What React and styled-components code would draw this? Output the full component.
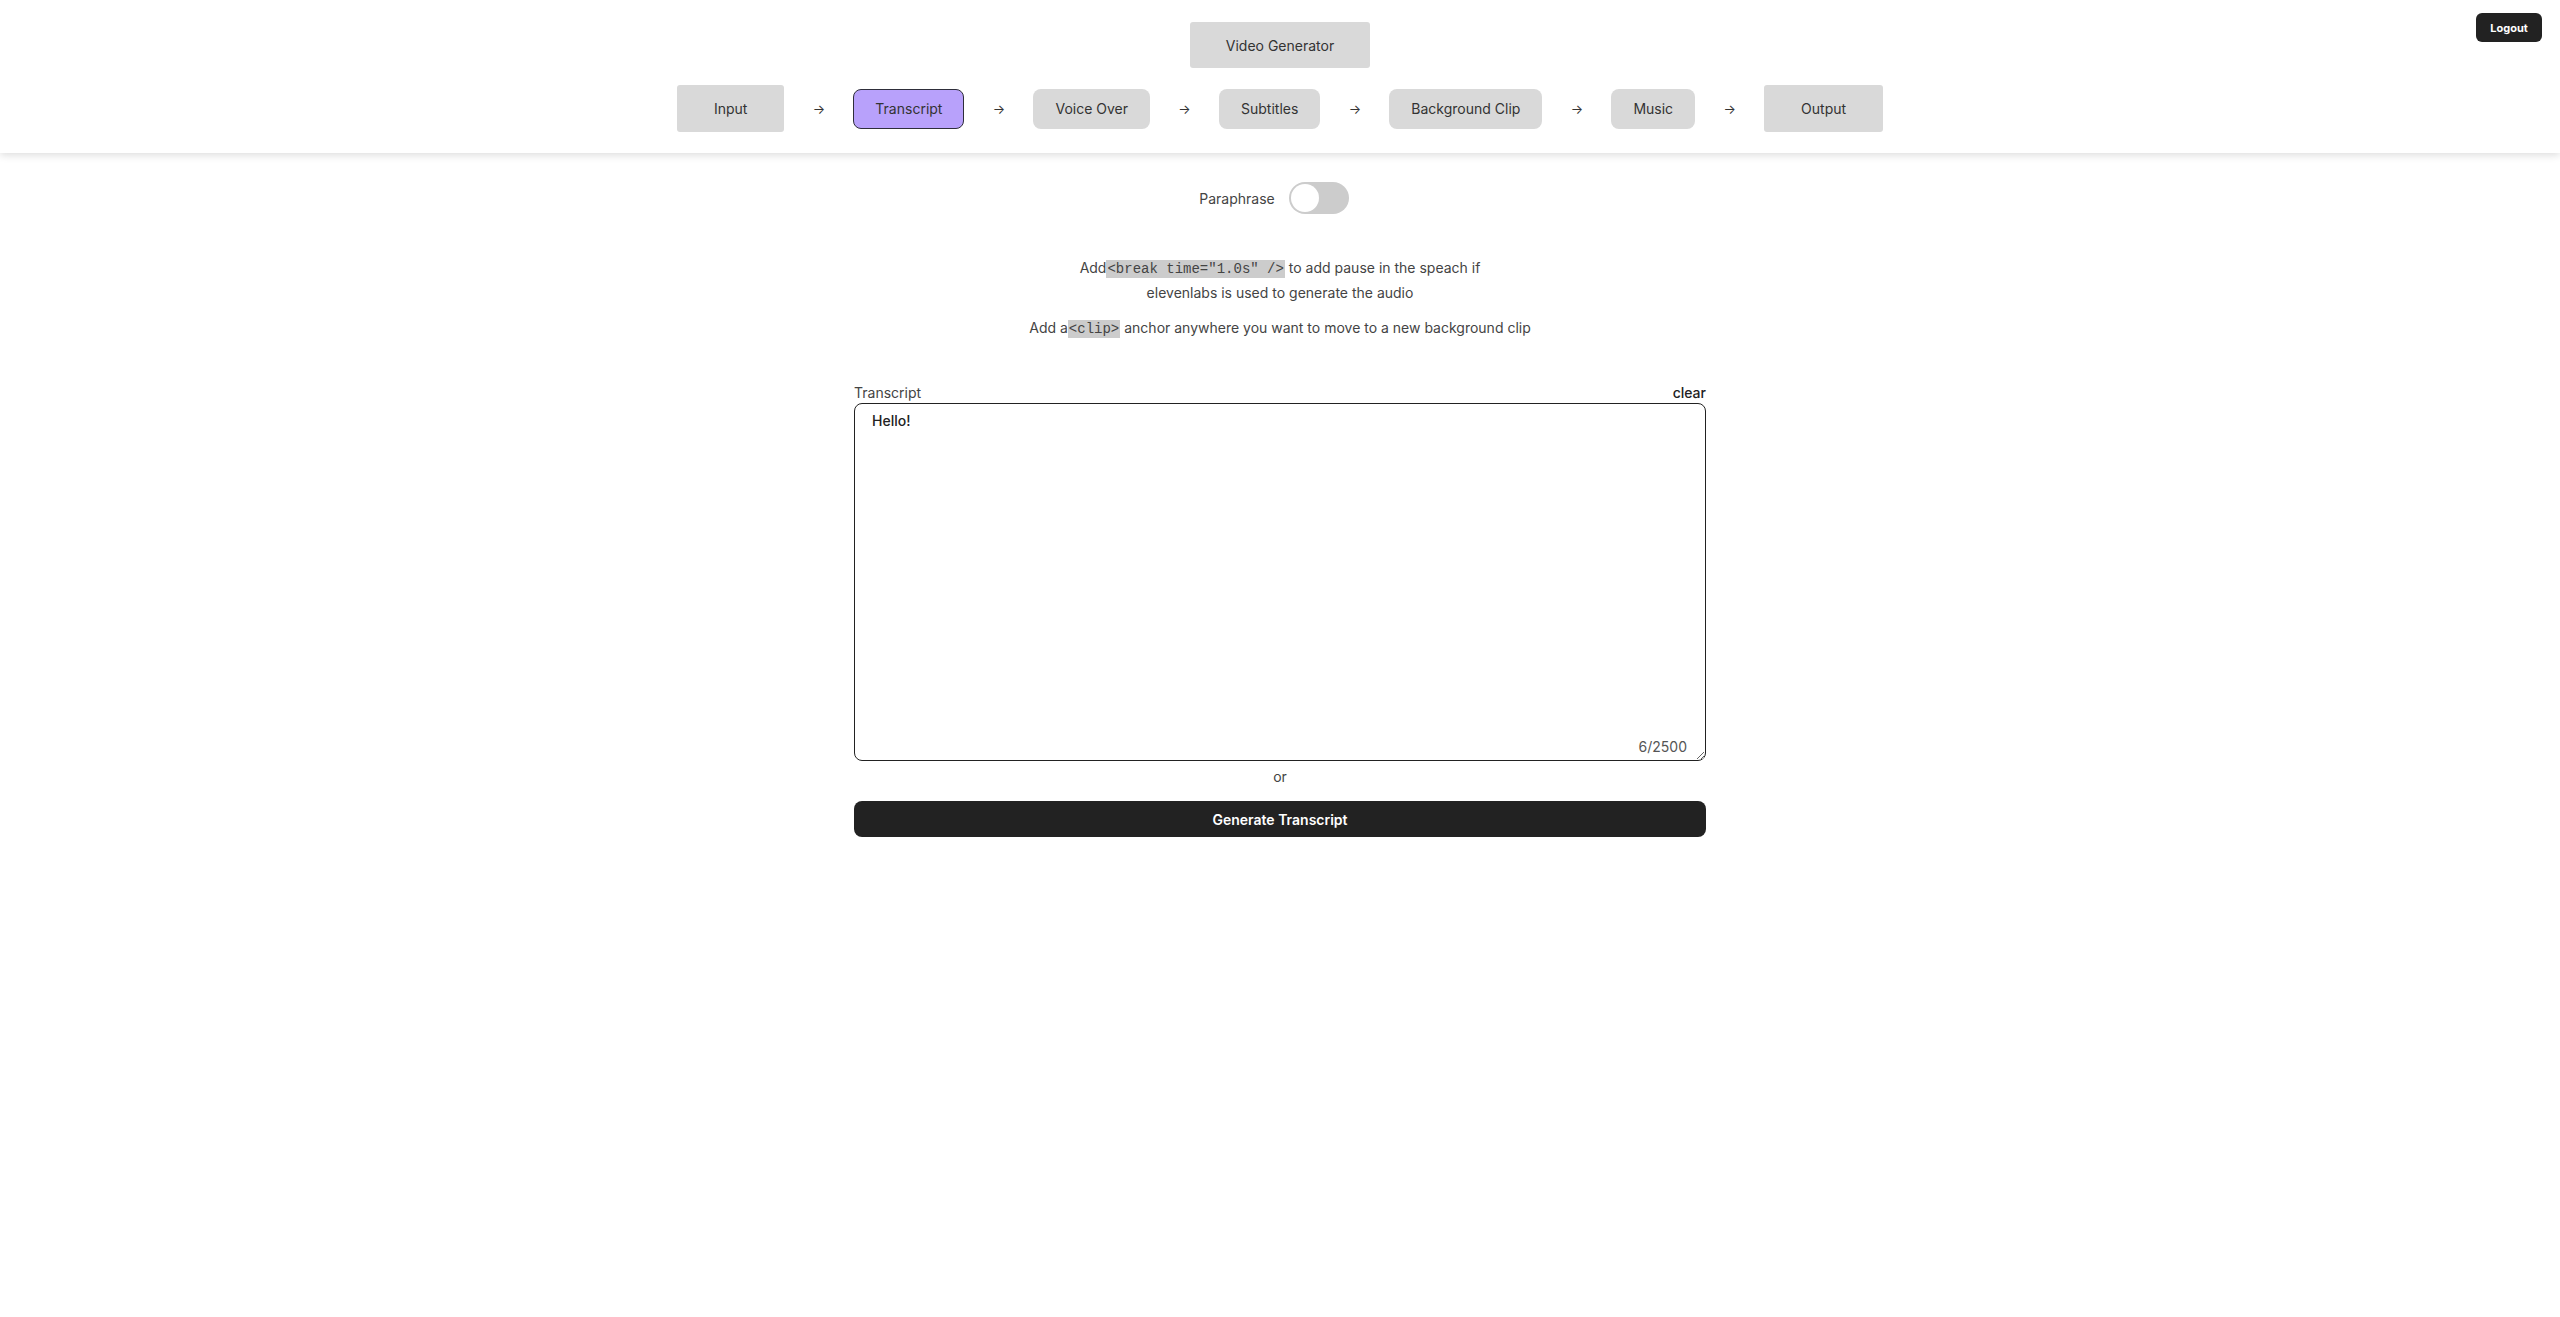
import React, { useState } from "react";
import styled, { createGlobalStyle } from "styled-components";

const GlobalStyle = createGlobalStyle`
  * {
    box-sizing: border-box;
  }
  body {
    margin: 0;
    background: #fff;
    font-family: Inter, "Noto Sans", "Liberation Sans", sans-serif;
    font-size: 14px;
    color: #333;
  }
`;

const Header = styled.header`
  position: relative;
  background: #fff;
  padding: 22px 0 21px;
  display: flex;
  flex-direction: column;
  align-items: center;
  gap: 17px;
  box-shadow: 0 2px 8px rgba(0, 0, 0, 0.14);
`;

const Title = styled.div`
  width: 180px;
  height: 46px;
  display: flex;
  align-items: center;
  justify-content: center;
  background: #d9d9d9;
  border-radius: 3px;
  color: #333;
`;

const LogoutButton = styled.button`
  position: absolute;
  top: 13px;
  right: 18px;
  width: 66px;
  height: 29px;
  border: none;
  border-radius: 6px;
  background: #222;
  color: #fff;
  font-family: inherit;
  font-size: 11px;
  font-weight: 700;
  cursor: pointer;
`;

const Steps = styled.nav`
  display: flex;
  align-items: center;
  gap: 28px;
`;

const Step = styled.div`
  height: ${({ $edge }) => ($edge ? "47px" : "40px")};
  padding: 0 ${({ $edge }) => ($edge ? "36px" : "21px")};
  display: flex;
  align-items: center;
  justify-content: center;
  border-radius: ${({ $edge }) => ($edge ? "3px" : "8px")};
  background: ${({ $active }) => ($active ? "#b8a1fb" : "#d9d9d9")};
  border: 1px solid ${({ $active }) => ($active ? "#2e2e3a" : "transparent")};
  color: #333;
  white-space: nowrap;
`;

const Arrow = styled.span`
  width: 13px;
  text-align: center;
  color: #333;
  font-size: 13px;
`;

const Main = styled.main`
  width: 852px;
  margin: 0 auto;
  padding-top: 29px;
  display: flex;
  flex-direction: column;
`;

const ParaphraseRow = styled.div`
  display: flex;
  align-items: center;
  justify-content: center;
  gap: 14px;
  height: 32px;
  padding-right: 12px;
  color: #444;
`;

const Toggle = styled.button`
  position: relative;
  width: 60px;
  height: 32px;
  border: none;
  border-radius: 16px;
  padding: 0;
  background: ${({ $on }) => ($on ? "#b8a1fb" : "#ccc")};
  cursor: pointer;
`;

const Knob = styled.span`
  position: absolute;
  top: 2px;
  left: ${({ $on }) => ($on ? "30px" : "2px")};
  width: 28px;
  height: 28px;
  border-radius: 50%;
  background: #fff;
`;

const Notes = styled.div`
  margin-top: 42px;
  display: flex;
  flex-direction: column;
  gap: 12px;
  text-align: center;
  color: #444;
  line-height: 23px;
`;

const Note = styled.p`
  margin: 0;
`;

const Code = styled.code`
  font-family: "Liberation Mono", "DejaVu Sans Mono", monospace;
  font-size: 14px;
  background: #ccc;
  color: #444;
  padding: 1px 1px;
`;

const FieldHead = styled.div`
  margin-top: 43px;
  display: flex;
  justify-content: space-between;
  align-items: center;
  line-height: 17px;
`;

const Label = styled.label`
  color: #444;
`;

const ClearLink = styled.button`
  border: none;
  background: none;
  padding: 0;
  font-family: inherit;
  font-size: 14px;
  font-weight: 500;
  color: #222;
  cursor: pointer;
`;

const TextWrap = styled.div`
  position: relative;
  margin-top: 2px;
`;

const TextArea = styled.textarea`
  display: block;
  width: 100%;
  height: 358px;
  padding: 8px 17px;
  border: 1px solid #222;
  border-radius: 8px;
  font-family: inherit;
  font-size: 14px;
  font-weight: 500;
  color: #222;
  resize: vertical;
  outline: none;
`;

const Counter = styled.span`
  position: absolute;
  right: 19px;
  bottom: 6px;
  color: #555;
  font-size: 14px;
`;

const Or = styled.div`
  margin-top: 7px;
  text-align: center;
  color: #444;
  line-height: 17px;
`;

const GenerateButton = styled.button`
  margin-top: 16px;
  height: 36px;
  border: none;
  border-radius: 8px;
  background: #222;
  color: #fff;
  font-family: inherit;
  font-size: 14px;
  font-weight: 600;
  cursor: pointer;
`;

const steps = [
  "Input",
  "Transcript",
  "Voice Over",
  "Subtitles",
  "Background Clip",
  "Music",
  "Output",
];

const App = () => {
  const [paraphrase, setParaphrase] = useState(false);
  const [text, setText] = useState("Hello!");

  return (
    <>
      <GlobalStyle />
      <Header>
        <Title>Video Generator</Title>
        <Steps>
          {steps.map((name, i) => (
            <React.Fragment key={name}>
              {i > 0 && <Arrow>→</Arrow>}
              <Step
                $edge={i === 0 || i === steps.length - 1}
                $active={name === "Transcript"}
              >
                {name}
              </Step>
            </React.Fragment>
          ))}
        </Steps>
        <LogoutButton>Logout</LogoutButton>
      </Header>
      <Main>
        <ParaphraseRow>
          <span>Paraphrase</span>
          <Toggle $on={paraphrase} onClick={() => setParaphrase(!paraphrase)}>
            <Knob $on={paraphrase} />
          </Toggle>
        </ParaphraseRow>
        <Notes>
          <Note>
            Add<Code>&lt;break time="1.0s" /&gt;</Code> to add pause in the speach if
            <br />
            elevenlabs is used to generate the audio
          </Note>
          <Note>
            Add a<Code>&lt;clip&gt;</Code> anchor anywhere you want to move to a new
            background clip
          </Note>
        </Notes>
        <FieldHead>
          <Label>Transcript</Label>
          <ClearLink onClick={() => setText("")}>clear</ClearLink>
        </FieldHead>
        <TextWrap>
          <TextArea value={text} onChange={(e) => setText(e.target.value)} />
          <Counter>{text.length}/2500</Counter>
        </TextWrap>
        <Or>or</Or>
        <GenerateButton>Generate Transcript</GenerateButton>
      </Main>
    </>
  );
};

export default App;
